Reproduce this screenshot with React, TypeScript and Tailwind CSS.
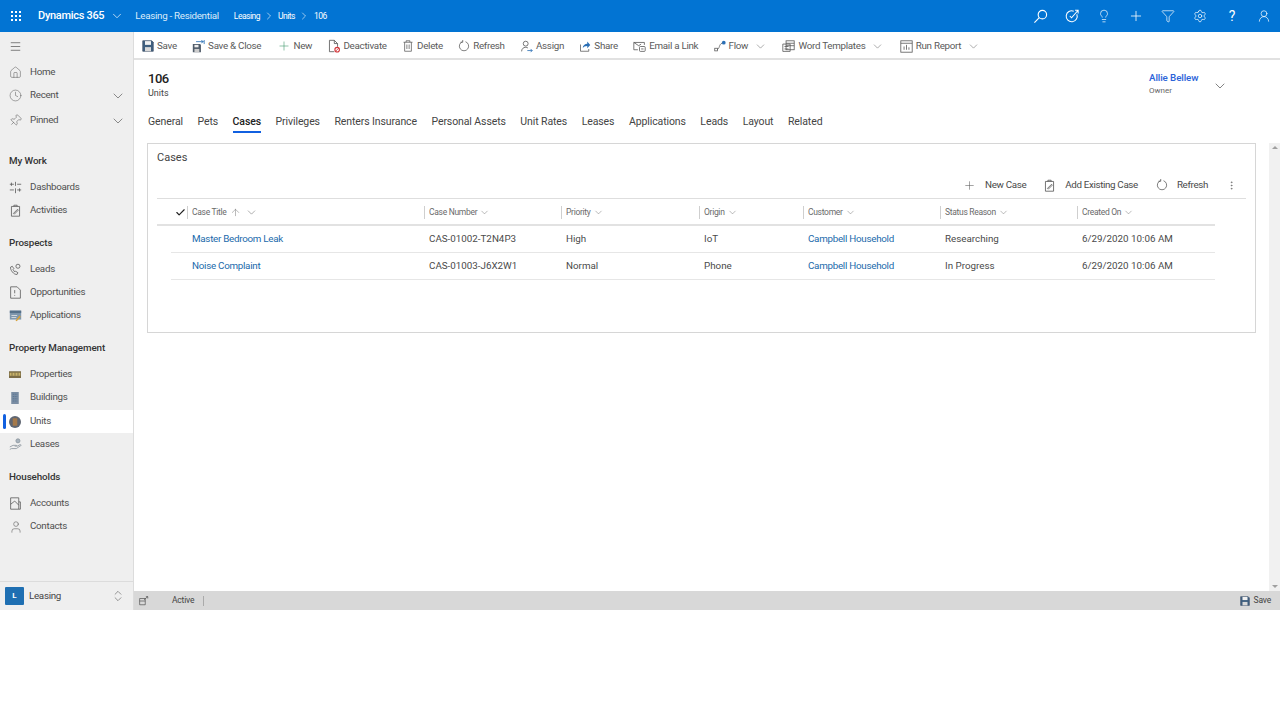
import type { ReactNode } from "react"
import {
  ChevronDown,
  ChevronRight,
  ChevronsUpDown,
  Clock,
  EllipsisVertical,
  Funnel,
  Home,
  Lightbulb,
  Menu,
  Pin,
  Plus,
  Settings,
  User,
  UserRound,
  ArrowUp,
  Check,
} from "lucide-react"

const FONT = "font-['Roboto','Noto_Sans',sans-serif]"

function Svg({ children, size = 14 }: { children: ReactNode; size?: number }) {
  return (
    <svg width={size} height={size} viewBox="0 0 16 16" fill="none" stroke="currentColor" strokeWidth="1" className="shrink-0">
      {children}
    </svg>
  )
}

function SaveIcon({ size = 12 }: { size?: number }) {
  return (
    <svg width={size} height={size} viewBox="0 0 16 16" className="shrink-0">
      <path d="M1 1h12l2 2v12H1z" fill="#3f5f7f" stroke="#44546a" />
      <rect x="4" y="1.500" width="8" height="5" fill="#f1f1f1" />
      <rect x="4" y="9.500" width="8" height="5.500" fill="#d9d9d9" />
    </svg>
  )
}

function SaveCloseIcon() {
  return (
    <svg width="13" height="13" viewBox="0 0 16 16" className="shrink-0">
      <path d="M1 5h9l1 1v9H1z" fill="#505c6a" />
      <rect x="3" y="6" width="5" height="3" fill="#eee" />
      <rect x="3" y="11" width="6" height="4" fill="#ccc" />
      <path d="M5 2h9M11.500 0.500 14 2l-2.500 1.500M15 0v5" stroke="#2a6fb5" fill="none" />
    </svg>
  )
}

function DeactivateIcon() {
  return (
    <svg width="13" height="14" viewBox="0 0 16 16" fill="none" className="shrink-0">
      <path d="M3 1h6l4 4v4M9 1v4h4M3 1v14h6" stroke="#555" />
      <circle cx="12.500" cy="12.500" r="2.800" stroke="#d13438" strokeWidth="1.300" />
      <path d="M10.500 14.500l4-4" stroke="#d13438" />
    </svg>
  )
}

function TrashIcon() {
  return (
    <Svg size={12}>
      <path d="M2 3h12M5.500 3V1h5v2M3.500 3v12h9V3M6.500 6v6M9.500 6v6" />
    </Svg>
  )
}

function RefreshIcon() {
  return (
    <Svg size={12}>
      <path d="M6 2.300A6.200 6.200 0 1 0 10 2.300" />
      <path d="M6.300 0v3H3.300" />
    </Svg>
  )
}

function AssignIcon() {
  return (
    <Svg size={13}>
      <circle cx="7" cy="4.500" r="3" />
      <path d="M2 14c0-3 2-5 5-5 1 0 2 .3 2.700.8" />
      <path d="M9 13h6M13 11l2 2-2 2" stroke="#2a6fb5" />
    </Svg>
  )
}

function ShareIcon() {
  return (
    <svg width="12" height="12" viewBox="0 0 16 16" fill="none" className="shrink-0">
      <path d="M2 6v9h11v-3" stroke="#555" />
      <path d="M5 11c0-4 3-6 6-6V2l4 4.500L11 11V8C8 8 6 9 5 11z" fill="#2a6fb5" />
    </svg>
  )
}

function EmailIcon() {
  return (
    <Svg size={13}>
      <path d="M1 3h13v3M1 3v9h5M1 3l6 4 3-2" />
      <rect x="8" y="8" width="7" height="6" rx="1" />
      <path d="M10 11h3" />
    </Svg>
  )
}

function FlowIcon() {
  return (
    <svg width="12" height="12" viewBox="0 0 16 16" fill="none" className="shrink-0">
      <path d="M4 12.500C8 12 6 6 11 4" stroke="#555" />
      <rect x="1" y="11" width="3.500" height="3.500" stroke="#555" />
      <circle cx="13" cy="3.500" r="2.500" fill="#2a6fb5" />
    </svg>
  )
}

function WordIcon() {
  return (
    <Svg size={13}>
      <rect x="5" y="1" width="10" height="11" />
      <path d="M5 4h10M5 7h10M1 5h9v9H1zM3 8h5M3 11h5" />
    </Svg>
  )
}

function ReportIcon() {
  return (
    <Svg size={13}>
      <rect x="1" y="1" width="14" height="14" />
      <path d="M1 4h14M5 12V8M8 12V6M11 12V9" />
    </Svg>
  )
}

function ClipboardIcon() {
  return (
    <Svg size={13}>
      <path d="M3 3h10v12H3zM6 3V1.500h4V3" />
      <path d="M5.500 11.500l5-5 1 1-5 5z" />
    </Svg>
  )
}

function CommandItem({ icon, label, caret }: { icon: ReactNode; label: string; caret?: boolean }) {
  return (
    <div className="flex items-center gap-[3px] text-[#5a5a5a]">
      {icon}
      <span className="whitespace-nowrap tracking-[-0.28px]">{label}</span>
      {caret && <ChevronDown size={13} strokeWidth={1} className="ml-[3px] text-[#666]" />}
    </div>
  )
}

function NavItem({ icon, label, caret, active }: { icon: ReactNode; label: string; caret?: boolean; active?: boolean }) {
  return (
    <div className={`relative flex h-[23px] items-center pl-[9px] pr-[7px] ${active ? "bg-white" : ""}`}>
      {active && <div className="absolute left-[3px] top-[4px] h-[15px] w-[2.500px] rounded-sm bg-[#1160e0]" />}
      <div className="flex w-[21px] shrink-0 justify-start text-[#5d5d5d]">{icon}</div>
      <span className="flex-1 tracking-[-0.3px] text-[#4f4f4f]">{label}</span>
      {caret && <ChevronDown size={16} strokeWidth={1} className="text-[#555]" />}
    </div>
  )
}

function NavHeader({ label, className }: { label: string; className: string }) {
  return <div className={`flex h-[23px] items-center pl-[9px] font-medium tracking-[-0.1px] text-[#333] ${className}`}>{label}</div>
}

const HeaderCols = ["Case Number", "Priority", "Origin", "Customer", "Status Reason", "Created On"]

const gridCols = "grid grid-cols-[30px_237px_137px_138px_104px_137px_137px_138px]"

const rows = [
  { title: "Master Bedroom Leak", num: "CAS-01002-T2N4P3", pri: "High", origin: "IoT", status: "Researching" },
  { title: "Noise Complaint", num: "CAS-01003-J6X2W1", pri: "Normal", origin: "Phone", status: "In Progress" },
]

const tabs = ["General", "Pets", "Cases", "Privileges", "Renters Insurance", "Personal Assets", "Unit Rates", "Leases", "Applications", "Leads", "Layout", "Related"]

export default function App() {
  return (
    <div className={`h-[720px] w-[1280px] overflow-hidden bg-white text-[9.800px] ${FONT}`}>
      <div className="flex h-[610px] flex-col">
        {/* top bar */}
        <header className="flex h-[32px] shrink-0 items-center bg-[#0274d3] text-white">
          <svg width="12" height="12" viewBox="0 0 12 12" fill="#fff" className="ml-[10px]">
            {[1, 5, 9].flatMap((y) => [1, 5, 9].map((x) => <rect key={`${x}${y}`} x={x} y={y} width="2" height="2" />))}
          </svg>
          <span className="ml-[16px] text-[11px] font-medium tracking-[-0.3px]">Dynamics 365</span>
          <ChevronDown size={14} strokeWidth={1.200} className="ml-[6px]" />
          <span className="ml-[11px] tracking-[-0.3px] text-[#dcebf9]">Leasing - Residential</span>
          <span className="ml-[15px] text-[8.500px] tracking-[-0.5px]">Leasing</span>
          <ChevronRight size={12} strokeWidth={1.200} className="ml-[3px]" />
          <span className="ml-[3px] text-[8.500px] tracking-[-0.5px]">Units</span>
          <ChevronRight size={12} strokeWidth={1.200} className="ml-[3px]" />
          <span className="ml-[4px] text-[8.500px] tracking-[-0.5px]">106</span>
          <div className="ml-auto flex items-center">
            {[
              <Svg size={15}>
                <circle cx="10" cy="6" r="4.500" strokeWidth="1.200" />
                <path d="M6.700 9.300 1.500 14.500" strokeWidth="1.200" />
              </Svg>,
              <svg width="14" height="14" viewBox="0 0 16 16" fill="none" stroke="#fff" strokeWidth="1.200">
                <path d="M13.500 6A6.300 6.300 0 1 1 10 2.500" />
                <path d="M5.500 8l2 2L14.500 2M11.500 1.500h3.500V5" />
              </svg>,
              <Lightbulb size={14} strokeWidth={1.200} />,
              <Plus size={16} strokeWidth={1.200} />,
              <Funnel size={14} strokeWidth={1.200} />,
              <Settings size={14} strokeWidth={1.200} />,
              <span className="text-[14px] leading-none">?</span>,
              <UserRound size={14} strokeWidth={1.200} />,
            ].map((icon, i) => (
              <div key={i} className="flex h-[32px] w-[32px] items-center justify-center">
                {icon}
              </div>
            ))}
          </div>
        </header>

        <div className="flex min-h-0 flex-1">
          {/* sitemap */}
          <nav className="flex w-[134px] shrink-0 flex-col border-r border-[#dcdcdc] bg-[#efefef]">
            <div className="flex h-[28px] items-center pl-[9px] text-[#444]">
              <Menu size={13} strokeWidth={1.200} />
            </div>
            <div className="h-px" />
            <NavItem icon={<Home size={13} strokeWidth={1} />} label="Home" />
            <NavItem icon={<Clock size={13} strokeWidth={1} />} label="Recent" caret />
            <div className="h-[2px]" />
            <NavItem icon={<Pin size={13} strokeWidth={1} className="rotate-45" />} label="Pinned" caret />
            <NavHeader label="My Work" className="mt-[18px] mb-[3px]" />
            <NavItem
              icon={
                <Svg size={13}>
                  <path d="M1 4h5M10 4h5M8 1v5M1 11h5M10 11h5M8 9v6M3 2v4M13 9v4" />
                </Svg>
              }
              label="Dashboards"
            />
            <NavItem icon={<ClipboardIcon />} label="Activities" />
            <NavHeader label="Prospects" className="mt-[10px] mb-[3px]" />
            <NavItem
              icon={
                <Svg size={13}>
                  <path d="M2 5c-1 3 4 10 8 9l1-2-3-2-1 1-2-3 1-1-2-3z" />
                  <circle cx="11" cy="4" r="2.500" />
                </Svg>
              }
              label="Leads"
            />
            <NavItem
              icon={
                <Svg size={13}>
                  <path d="M2 1h8l4 4v10H2zM7 5v4M7 11v1" />
                </Svg>
              }
              label="Opportunities"
            />
            <NavItem
              icon={
                <svg width="13" height="13" viewBox="0 0 16 16" className="shrink-0">
                  <rect x="1" y="2" width="14" height="11" fill="#7f97ad" />
                  <rect x="1" y="2" width="14" height="3" fill="#56718a" />
                  <path d="M3 8h7M3 10.500h6" stroke="#e6e6e6" />
                  <path d="M8 14l5-6 1.500 1.500-5 5.500z" fill="#d8a23a" />
                </svg>
              }
              label="Applications"
            />
            <NavHeader label="Property Management" className="mt-[10px] mb-[3px]" />
            <NavItem
              icon={
                <svg width="12" height="12" viewBox="0 0 16 16" className="shrink-0">
                  <rect x="0" y="3" width="16" height="9" fill="#7b6c46" />
                  <rect x="1" y="5" width="14" height="4" fill="#c9b36a" />
                  <path d="M4 5v4M8 5v4M12 5v4" stroke="#6c6040" />
                </svg>
              }
              label="Properties"
            />
            <NavItem
              icon={
                <svg width="12" height="12" viewBox="0 0 16 16" className="shrink-0">
                  <rect x="3" y="0" width="10" height="16" fill="#7a8da3" />
                  <path d="M5 3h6M5 6h6M5 9h6M5 12h6" stroke="#4c6c8e" strokeDasharray="1.500 1" />
                </svg>
              }
              label="Buildings"
            />
            <div className="h-px" />
            <NavItem
              active
              icon={
                <svg width="12" height="12" viewBox="0 0 16 16" className="shrink-0">
                  <circle cx="8" cy="8" r="8" fill="#5f6672" />
                  <rect x="5" y="3" width="6" height="10" fill="#a5794a" />
                </svg>
              }
              label="Units"
            />
            <NavItem
              icon={
                <svg width="13" height="13" viewBox="0 0 16 16" fill="none" stroke="#8a949c" className="shrink-0">
                  <path d="M1 11l4-2h4l1 1H7M10 10l4-2 1 1-6 4H3l-2 1" />
                  <circle cx="11" cy="3.500" r="2.500" fill="#a8b4be" />
                </svg>
              }
              label="Leases"
            />
            <NavHeader label="Households" className="mt-[10px] mb-[3px]" />
            <NavItem
              icon={
                <Svg size={13}>
                  <path d="M2 1h10v14H2zM12 6h2v9h-2M2 9l5-4 5 5" />
                </Svg>
              }
              label="Accounts"
            />
            <NavItem icon={<User size={14} strokeWidth={1} />} label="Contacts" />
            <div className="mt-auto flex h-[29px] items-center border-t border-[#dcdcdc] pl-[5px] pr-[8px]">
              <div className="flex h-[18px] w-[19px] items-center justify-center rounded-[1px] bg-[#1f6fb2] text-[8px] font-bold text-white">L</div>
              <span className="ml-[5px] flex-1 tracking-[-0.3px] text-[#444]">Leasing</span>
              <ChevronsUpDown size={14} strokeWidth={1} className="text-[#555]" />
            </div>
          </nav>

          {/* main column */}
          <main className="flex min-w-0 flex-1 flex-col">
            <div className="flex h-[28px] shrink-0 items-center gap-[15.250px] border-b-2 border-[#e1e1e1] pl-[8px] pt-[2px]">
              <CommandItem icon={<SaveIcon />} label="Save" />
              <CommandItem icon={<SaveCloseIcon />} label="Save & Close" />
              <CommandItem icon={<Plus size={14} strokeWidth={1} className="text-[#3f9a6a]" />} label="New" />
              <CommandItem icon={<DeactivateIcon />} label="Deactivate" />
              <CommandItem icon={<TrashIcon />} label="Delete" />
              <CommandItem icon={<RefreshIcon />} label="Refresh" />
              <CommandItem icon={<AssignIcon />} label="Assign" />
              <CommandItem icon={<ShareIcon />} label="Share" />
              <CommandItem icon={<EmailIcon />} label="Email a Link" />
              <CommandItem icon={<FlowIcon />} label="Flow" caret />
              <CommandItem icon={<WordIcon />} label="Word Templates" caret />
              <CommandItem icon={<ReportIcon />} label="Run Report" caret />
            </div>

            <div className="flex min-h-0 flex-1">
              <div className="min-w-0 flex-1 pl-[13px] pr-[13px]">
                <div className="flex h-[46px] items-start justify-between pt-[9px]">
                  <div className="pl-[1px]">
                    <div className="text-[13px] font-medium leading-[19px] tracking-[-0.5px] text-[#222]">106</div>
                    <div className="text-[9px] leading-[11px] text-[#444]">Units</div>
                  </div>
                  <div className="mr-[28px] flex items-center gap-[12px] pt-[2px]">
                    <div className="w-[51px]">
                      <div className="font-medium leading-[14px] tracking-[-0.1px] text-[#2b63d9]">Allie Bellew</div>
                      <div className="text-[8px] leading-[12px] text-[#666]">Owner</div>
                    </div>
                    <ChevronDown size={16} strokeWidth={1} className="mt-[3px] text-[#444]" />
                  </div>
                </div>

                <div className="flex h-[32px] gap-[14.500px] pl-[1px] text-[10.500px] tracking-[-0.1px] text-[#444]">
                  {tabs.map((t) => (
                    <div key={t} className="relative flex items-center whitespace-nowrap">
                      <span className={t === "Cases" ? "font-medium text-[#222]" : ""}>{t}</span>
                      {t === "Cases" && <div className="absolute bottom-[5px] left-0 right-0 h-[2px] bg-[#1160e0]" />}
                    </div>
                  ))}
                </div>

                {/* cases subgrid */}
                <div className="mt-[5px] h-[190px] border border-[#d6d6d6] pl-[9px] pr-[9px]">
                  <div className="pt-[6px] text-[11px] leading-[15px] text-[#444]">Cases</div>
                  <div className="mt-[7px] flex h-[27px] items-center justify-end border-b border-[#dedede] pr-[9px] tracking-[-0.35px] text-[#4a4a4a]">
                    <Plus size={13} strokeWidth={1} className="text-[#555]" />
                    <span className="ml-[9px]">New Case</span>
                    <div className="ml-[17px] text-[#555]">
                      <ClipboardIcon />
                    </div>
                    <span className="ml-[9px]">Add Existing Case</span>
                    <div className="ml-[18px] text-[#555]">
                      <RefreshIcon />
                    </div>
                    <span className="ml-[9px]">Refresh</span>
                    <EllipsisVertical size={11} strokeWidth={1.200} className="ml-[18px] text-[#555]" />
                  </div>

                  <div className={`${gridCols} h-[27px] w-[1058px] border-b-2 border-[#e2e2e2] pt-px text-[8.500px] tracking-[-0.3px] text-[#6a6a6a]`}>
                    <div className="flex items-center justify-end pr-[1px]">
                      <Check size={11} strokeWidth={2.500} className="text-[#222]" />
                    </div>
                    <div className="my-[6px] flex items-center border-l border-[#cfcfcf] pl-[4px]">
                      Case Title
                      <ArrowUp size={11} strokeWidth={1} className="ml-[3px]" />
                      <ChevronDown size={13} strokeWidth={1} className="ml-[4px]" />
                    </div>
                    {HeaderCols.map((c) => (
                      <div key={c} className="my-[6px] flex items-center border-l border-[#cfcfcf] pl-[4px]">
                        {c}
                        <ChevronDown size={11} strokeWidth={1} className="ml-[2px]" />
                      </div>
                    ))}
                  </div>

                  {rows.map((r) => (
                    <div key={r.num} className={`${gridCols} h-[27px] w-[1058px] items-center text-[#4a4a4a]`}>
                      <div className="ml-[14px] h-full border-b border-[#e6e6e6]" />
                      <div className="flex h-full items-center border-b border-[#e6e6e6] pl-[5px] tracking-[-0.27px] text-[#1a6aab]">{r.title}</div>
                      <div className="flex h-full items-center border-b border-[#e6e6e6] pl-[5px]">{r.num}</div>
                      <div className="flex h-full items-center border-b border-[#e6e6e6] pl-[5px]">{r.pri}</div>
                      <div className="flex h-full items-center border-b border-[#e6e6e6] pl-[5px]">{r.origin}</div>
                      <div className="flex h-full items-center border-b border-[#e6e6e6] pl-[5px] tracking-[-0.27px] text-[#1a6aab]">Campbell Household</div>
                      <div className="flex h-full items-center border-b border-[#e6e6e6] pl-[5px]">{r.status}</div>
                      <div className="flex h-full items-center border-b border-[#e6e6e6] pl-[5px]">6/29/2020 10:06 AM</div>
                    </div>
                  ))}
                </div>
              </div>

              {/* scrollbar */}
              <div className="mt-[83px] flex w-[11px] shrink-0 flex-col items-center justify-between bg-[#f1f1f1] py-[3px]">
                <div className="h-0 w-0 border-x-[3px] border-b-[3px] border-x-transparent border-b-[#a0a0a0]" />
                <div className="h-0 w-0 border-x-[3px] border-t-[3px] border-x-transparent border-t-[#a0a0a0]" />
              </div>
            </div>

            {/* status bar */}
            <div className="flex h-[19px] shrink-0 items-center bg-[#d8d8d8] pl-[5px] pr-[9px] text-[8.500px] tracking-[-0.2px] text-[#444]">
              <Svg size={10}>
                <path d="M1 4h9v10H1zM1 8h9M8 6l6-5M11 1h3v3" />
              </Svg>
              <span className="ml-[23px]">Active</span>
              <div className="ml-[9px] h-[10px] w-px bg-[#aaa]" />
              <div className="ml-auto flex items-center gap-[4px]">
                <SaveIcon size={10} />
                <span>Save</span>
              </div>
            </div>
          </main>
        </div>
      </div>
    </div>
  )
}
